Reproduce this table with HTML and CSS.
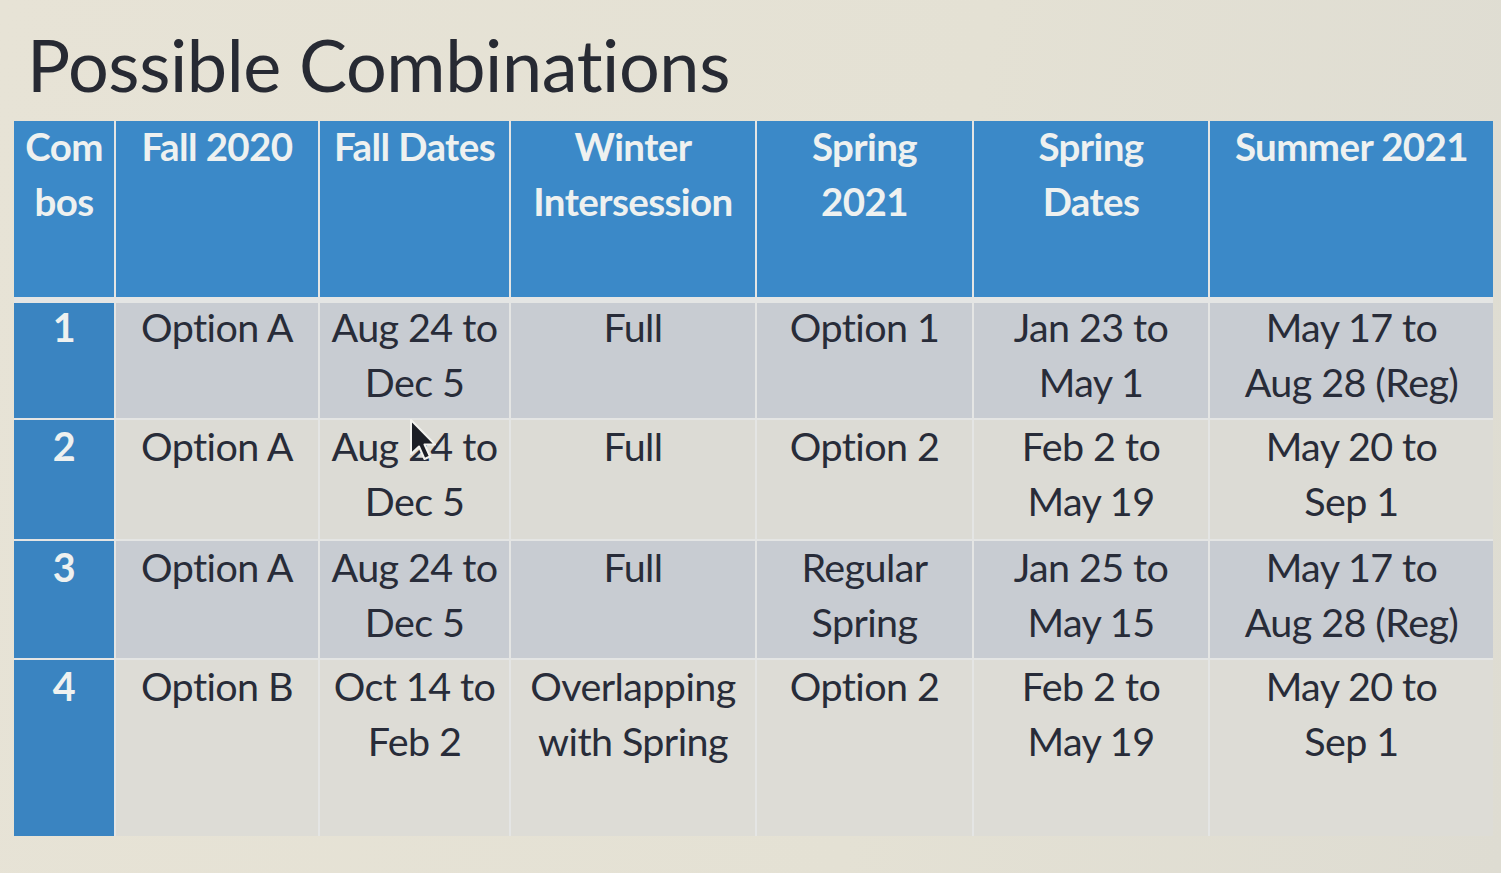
FILE: index.html
```html
<!DOCTYPE html>
<html lang="en">
<head>
<meta charset="utf-8">
<title>Possible Combinations</title>
<link rel="stylesheet" href="styles.css">
</head>
<body>
<div class="slide">
  <h1 class="title">Possible Combinations</h1>
  <div class="table">
    <div class="grid head">
      <div class="cell"><span>Com<br>bos</span></div>
      <div class="cell"><span>Fall 2020</span></div>
      <div class="cell"><span>Fall Dates</span></div>
      <div class="cell"><span>Winter<br>Intersession</span></div>
      <div class="cell"><span>Spring<br>2021</span></div>
      <div class="cell"><span>Spring<br>Dates</span></div>
      <div class="cell"><span>Summer 2021</span></div>
    </div>
    <div class="grid body">
      <div class="cell num r1"><span>1</span></div>
      <div class="cell r1"><span>Option A</span></div>
      <div class="cell r1"><span>Aug 24 to<br>Dec 5</span></div>
      <div class="cell r1"><span>Full</span></div>
      <div class="cell r1"><span>Option 1</span></div>
      <div class="cell r1"><span>Jan 23 to<br>May 1</span></div>
      <div class="cell r1"><span>May 17 to<br>Aug 28 (Reg)</span></div>

      <div class="cell num r2"><span>2</span></div>
      <div class="cell r2"><span>Option A</span></div>
      <div class="cell r2"><span>Aug 24 to<br>Dec 5</span></div>
      <div class="cell r2"><span>Full</span></div>
      <div class="cell r2"><span>Option 2</span></div>
      <div class="cell r2"><span>Feb 2 to<br>May 19</span></div>
      <div class="cell r2"><span>May 20 to<br>Sep 1</span></div>

      <div class="cell num r3"><span>3</span></div>
      <div class="cell r3"><span>Option A</span></div>
      <div class="cell r3"><span>Aug 24 to<br>Dec 5</span></div>
      <div class="cell r3"><span>Full</span></div>
      <div class="cell r3"><span>Regular<br>Spring</span></div>
      <div class="cell r3"><span>Jan 25 to<br>May 15</span></div>
      <div class="cell r3"><span>May 17 to<br>Aug 28 (Reg)</span></div>

      <div class="cell num r4"><span>4</span></div>
      <div class="cell r4"><span>Option B</span></div>
      <div class="cell r4"><span>Oct 14 to<br>Feb 2</span></div>
      <div class="cell r4"><span>Overlapping<br>with Spring</span></div>
      <div class="cell r4"><span>Option 2</span></div>
      <div class="cell r4"><span>Feb 2 to<br>May 19</span></div>
      <div class="cell r4"><span>May 20 to<br>Sep 1</span></div>
    </div>
    <svg class="cursor" width="30" height="46" viewBox="0 0 30 46" aria-hidden="true">
      <path d="M2 2 L2 36 L10 28.5 L15.5 41 L21 38.5 L15.5 26.5 L26 26.5 Z" fill="#1c1f26" stroke="#f2f2ee" stroke-width="2" stroke-linejoin="round"/>
    </svg>
  </div>
</div>
</body>
</html>
```
FILE: styles.css
```css
html, body {
  margin: 0;
  padding: 0;
}
body {
  width: 1501px;
  height: 873px;
  overflow: hidden;
  background: linear-gradient(100deg, #e7e3d6 0%, #e4e1d4 60%, #dedcd2 100%);
  font-family: Lato, "Open Sans", "Liberation Sans", sans-serif;
}
.slide {
  padding: 0 0 0 14px;
}
.title {
  margin: 0;
  padding: 22px 0 0 13px;
  height: 121px;
  box-sizing: border-box;
  font-weight: 400;
  font-size: 72px;
  line-height: 84px;
  color: #272a33;
  letter-spacing: -0.4px;
}
.table {
  position: relative;
  width: 1479px;
  background: #e4e5e4;
}
.grid {
  display: grid;
  grid-template-columns: 100px 202px 189px 244px 215px 234px 283px;
  column-gap: 2px;
  row-gap: 2px;
}
.head {
  height: 176px;
  margin-bottom: 6px;
}
.body {
  grid-template-rows: 115px 119px 117px 176px;
}
.cell {
  text-align: center;
  font-size: 39.5px;
  line-height: 55px;
  color: #282c39;
  letter-spacing: -0.6px;
  white-space: nowrap;
  overflow: hidden;
}
.cell span {
  display: block;
  margin-top: -2px;
}
.body .r1 span {
  margin-top: -4px;
}
.head .cell {
  background: #3b89c8;
  color: #eef1f0;
  font-weight: 700;
  font-size: 38.5px;
}
.head .cell span {
  margin-top: -2px;
}
.r1, .r3 { background: #c8ccd2; }
.r2 { background: #dcdbd5; }
.r4 { background: #dddcd6; }
.cell.num {
  background: #3a84c1;
  color: #eef1f0;
  font-weight: 700;
}
.cursor {
  position: absolute;
  left: 395px;
  top: 297px;
}
```
